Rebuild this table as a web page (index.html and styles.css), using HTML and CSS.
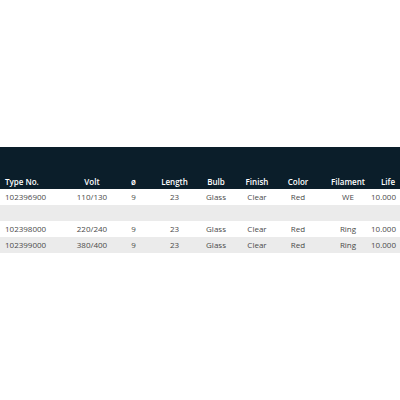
FILE: index.html
```html
<!DOCTYPE html>
<html>
<head>
<meta charset="utf-8">
<link rel="stylesheet" href="styles.css">
</head>
<body>
<div class="spec">
  <div class="row head">
    <div class="c first">Type No.</div><div class="c">Volt</div><div class="c">ø</div><div class="c">Length</div><div class="c">Bulb</div><div class="c">Finish</div><div class="c">Color</div><div class="c fil">Filament</div><div class="c last">Life</div>
  </div>
  <div class="row">
    <div class="c first">102396900</div><div class="c">110/130</div><div class="c">9</div><div class="c">23</div><div class="c">Glass</div><div class="c">Clear</div><div class="c">Red</div><div class="c fil">WE</div><div class="c last">10.000</div>
  </div>
  <div class="row alt empty"></div>
  <div class="row">
    <div class="c first">102398000</div><div class="c">220/240</div><div class="c">9</div><div class="c">23</div><div class="c">Glass</div><div class="c">Clear</div><div class="c">Red</div><div class="c fil">Ring</div><div class="c last">10.000</div>
  </div>
  <div class="row alt">
    <div class="c first">102399000</div><div class="c">380/400</div><div class="c">9</div><div class="c">23</div><div class="c">Glass</div><div class="c">Clear</div><div class="c">Red</div><div class="c fil">Ring</div><div class="c last">10.000</div>
  </div>
</div>
</body>
</html>
```
FILE: styles.css
```css
html, body {
  margin: 0;
  background: #ffffff;
}
body {
  font-family: "Open Sans", "Liberation Sans", sans-serif;
  font-size: 8px;
  color: #4a4a4a;
}
.spec {
  padding-top: 147px;
}
.row {
  display: grid;
  grid-template-columns: 71px 42px 41px 41px 42px 40px 42px 52px 1fr;
  height: 16px;
  align-items: center;
}
.row.alt {
  background: #ebebeb;
}
.row.head {
  height: 42px;
  background: #0b1e2a;
  color: #ffffff;
  font-weight: 600;
  align-items: end;
  padding-bottom: 1px;
  box-sizing: border-box;
}
.c {
  text-align: center;
  white-space: nowrap;
  line-height: 12px;
}
.c.first {
  text-align: left;
  padding-left: 5px;
}
.c.fil {
  padding-left: 6px;
}
.c.last {
  text-align: right;
  padding-right: 5px;
}
```
